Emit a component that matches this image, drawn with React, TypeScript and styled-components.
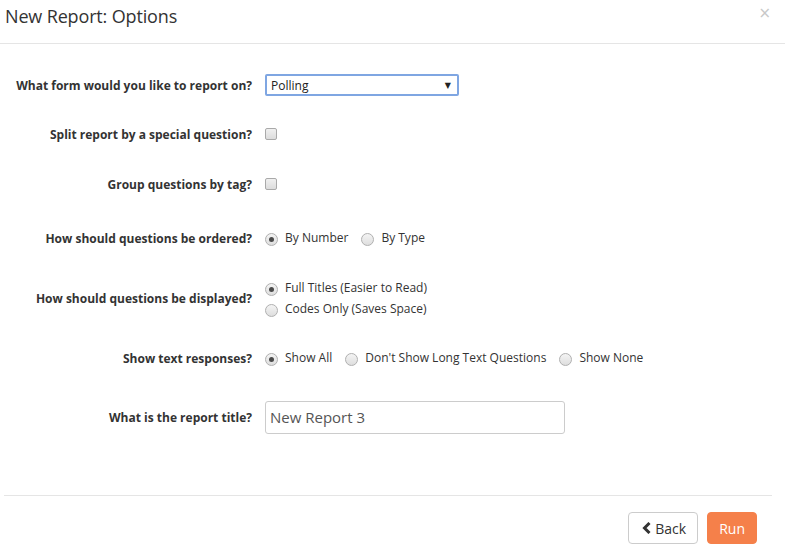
import React from "react";
import styled, { createGlobalStyle } from "styled-components";

const Global = createGlobalStyle`
  html, body { margin: 0; padding: 0; background: #fff; }
  body { font-family: "Open Sans", "Noto Sans", sans-serif; color: #333; }
  * { box-sizing: border-box; }
`;

const Modal = styled.div`
  width: 785px;
  height: 547px;
  display: flex;
  flex-direction: column;
  background: #fff;
`;

const Header = styled.div`
  height: 44px;
  border-bottom: 1px solid #e5e5e5;
  display: flex;
  align-items: flex-start;
  justify-content: space-between;
  padding: 3px 14px 0 5px;
`;

const Title = styled.h4`
  margin: 0;
  font-size: 18px;
  font-weight: 400;
  line-height: 26px;
  letter-spacing: -0.15px;
  color: #333;
`;

const Close = styled.span`
  font-family: "DejaVu Sans", sans-serif;
  font-size: 15px;
  line-height: 18px;
  color: #c8c8c8;
  margin-top: 1px;
`;

const Body = styled.div`
  flex: 1;
  display: flex;
  flex-direction: column;
  padding-top: 16px;
`;

const Row = styled.div<{ $h: number }>`
  display: grid;
  grid-template-columns: 252px 1fr;
  column-gap: 13px;
  align-items: center;
  height: ${(p) => p.$h}px;
`;

const Label = styled.label`
  text-align: right;
  font-size: 12px;
  font-weight: 700;
  color: #333;
`;

const Select = styled.div`
  width: 194px;
  height: 22px;
  border: 2px solid #7fa6e2;
  border-radius: 2px;
  display: flex;
  align-items: center;
  justify-content: space-between;
  padding: 0 6px 0 4px;
  font-size: 12px;
  color: #222;
`;

const Arrow = styled.span`
  font-family: "DejaVu Sans", sans-serif;
  font-size: 8px;
  color: #222;
`;

const Check = styled.span`
  display: inline-block;
  width: 12px;
  height: 12px;
  border: 1px solid #a9a9a9;
  border-radius: 2px;
  background: linear-gradient(#f0f0f0, #dcdcdc);
`;

const Options = styled.div<{ $column?: boolean }>`
  display: flex;
  flex-direction: ${(p) => (p.$column ? "column" : "row")};
  align-items: ${(p) => (p.$column ? "flex-start" : "center")};
  gap: ${(p) => (p.$column ? "5px" : "13px")};
`;

const Option = styled.span`
  display: inline-flex;
  align-items: center;
  gap: 7px;
  font-size: 12px;
  color: #333;
  line-height: 16px;
`;

const Radio = styled.span<{ $on?: boolean }>`
  position: relative;
  display: inline-block;
  width: 13px;
  height: 13px;
  border-radius: 50%;
  border: 1px solid #b0b0b0;
  background: linear-gradient(#f4f4f4, #dedede);
  margin-top: 3px;
  &::after {
    content: "";
    display: ${(p) => (p.$on ? "block" : "none")};
    position: absolute;
    left: 3px;
    top: 3px;
    width: 5px;
    height: 5px;
    border-radius: 50%;
    background: #4a4a4a;
  }
`;

const TextInput = styled.input`
  width: 300px;
  height: 33px;
  border: 1px solid #ccc;
  border-radius: 3px;
  padding: 0 4px;
  font-family: "Open Sans", sans-serif;
  font-size: 15px;
  color: #555;
  outline: none;
`;

const Footer = styled.div`
  margin: 0 13px 0 4px;
  border-top: 1px solid #e5e5e5;
  height: 52px;
  display: flex;
  justify-content: flex-end;
  align-items: flex-start;
  gap: 9px;
  padding: 16px 15px 0 0;
`;

const Button = styled.button<{ $primary?: boolean }>`
  height: 32px;
  padding: 0 11px 0 ${(p) => (p.$primary ? 11 : 13)}px;
  border-radius: 4px;
  font-family: "Open Sans", sans-serif;
  font-size: 14px;
  display: inline-flex;
  align-items: center;
  gap: 4px;
  cursor: pointer;
  border: 1px solid ${(p) => (p.$primary ? "#f5804a" : "#ccc")};
  background: ${(p) => (p.$primary ? "#f5804a" : "#fff")};
  color: ${(p) => (p.$primary ? "#fff" : "#333")};
`;

const Chevron = () => (
  <svg width="9" height="12" viewBox="0 0 9 12">
    <path d="M7.5 1 L2.5 6 L7.5 11" fill="none" stroke="#333" strokeWidth="3" />
  </svg>
);

export default function App() {
  return (
    <Modal>
      <Global />
      <Header>
        <Title>New Report: Options</Title>
        <Close>×</Close>
      </Header>
      <Body>
        <Row $h={50}>
          <Label>What form would you like to report on?</Label>
          <Select>
            <span>Polling</span>
            <Arrow>▼</Arrow>
          </Select>
        </Row>
        <Row $h={48}>
          <Label>Split report by a special question?</Label>
          <div><Check /></div>
        </Row>
        <Row $h={52}>
          <Label>Group questions by tag?</Label>
          <div><Check /></div>
        </Row>
        <Row $h={56}>
          <Label>How should questions be ordered?</Label>
          <Options>
            <Option><Radio $on />By Number</Option>
            <Option><Radio />By Type</Option>
          </Options>
        </Row>
        <Row $h={64}>
          <Label>How should questions be displayed?</Label>
          <Options $column>
            <Option><Radio $on />Full Titles (Easier to Read)</Option>
            <Option><Radio />Codes Only (Saves Space)</Option>
          </Options>
        </Row>
        <Row $h={56}>
          <Label>Show text responses?</Label>
          <Options>
            <Option><Radio $on />Show All</Option>
            <Option><Radio />Don't Show Long Text Questions</Option>
            <Option><Radio />Show None</Option>
          </Options>
        </Row>
        <Row $h={62}>
          <Label>What is the report title?</Label>
          <div><TextInput defaultValue="New Report 3" /></div>
        </Row>
      </Body>
      <Footer>
        <Button><Chevron />Back</Button>
        <Button $primary>Run</Button>
      </Footer>
    </Modal>
  );
}
